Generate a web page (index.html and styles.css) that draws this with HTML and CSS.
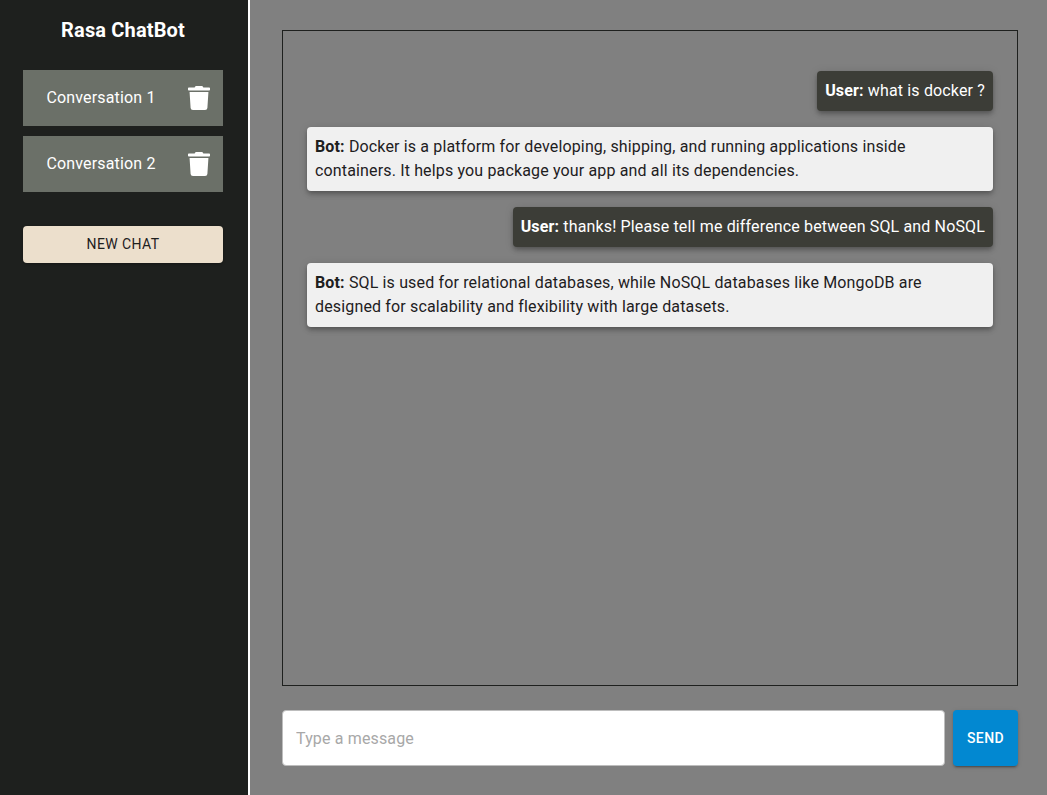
FILE: index.html
```html
<!DOCTYPE html>
<html lang="en">
<head>
<meta charset="utf-8">
<title>Rasa ChatBot</title>
<link rel="stylesheet" href="styles.css">
</head>
<body>
<div class="app">
  <aside class="sidebar">
    <h1 class="title">Rasa ChatBot</h1>
    <ul class="conversations">
      <li class="conversation">
        <span class="conversation-name">Conversation 1</span>
        <svg class="trash" viewBox="0 0 448 512" preserveAspectRatio="none" aria-hidden="true"><path d="M432 32H312l-9.4-18.7A24 24 0 0 0 281.1 0H166.8a23.72 23.72 0 0 0-21.4 13.3L136 32H16A16 16 0 0 0 0 48v32a16 16 0 0 0 16 16h416a16 16 0 0 0 16-16V48a16 16 0 0 0-16-16zM53.2 467a48 48 0 0 0 47.9 45h245.8a48 48 0 0 0 47.9-45L416 128H32z"/></svg>
      </li>
      <li class="conversation">
        <span class="conversation-name">Conversation 2</span>
        <svg class="trash" viewBox="0 0 448 512" preserveAspectRatio="none" aria-hidden="true"><path d="M432 32H312l-9.4-18.7A24 24 0 0 0 281.1 0H166.8a23.72 23.72 0 0 0-21.4 13.3L136 32H16A16 16 0 0 0 0 48v32a16 16 0 0 0 16 16h416a16 16 0 0 0 16-16V48a16 16 0 0 0-16-16zM53.2 467a48 48 0 0 0 47.9 45h245.8a48 48 0 0 0 47.9-45L416 128H32z"/></svg>
      </li>
    </ul>
    <button class="new-chat" type="button">New Chat</button>
  </aside>
  <main class="main">
    <section class="chat">
      <div class="message user"><strong>User:</strong> what is docker ?</div>
      <div class="message bot"><strong>Bot:</strong> Docker is a platform for developing, shipping, and running applications inside containers. It helps you package your app and all its dependencies.</div>
      <div class="message user"><strong>User:</strong> thanks! Please tell me difference between SQL and NoSQL</div>
      <div class="message bot"><strong>Bot:</strong> SQL is used for relational databases, while NoSQL databases like MongoDB are designed for scalability and flexibility with large datasets.</div>
    </section>
    <form class="composer">
      <input class="composer-input" type="text" placeholder="Type a message">
      <button class="send" type="button">Send</button>
    </form>
  </main>
</div>
</body>
</html>
```
FILE: styles.css
```css
* {
  box-sizing: border-box;
}

html,
body {
  height: 100%;
}

body {
  margin: 0;
  font-family: Roboto, "Liberation Sans", sans-serif;
  font-size: 16px;
  line-height: 24px;
  letter-spacing: 0.15px;
  background: #808080;
  overflow: hidden;
}

.app {
  display: flex;
  height: 795px;
}

.sidebar {
  flex: 0 0 250px;
  padding: 16px 25px 0 23px;
  background: #1e201e;
  border-right: 2px solid #ffffff;
}

.title {
  margin: 0 0 26px;
  color: #ffffff;
  font-size: 20px;
  line-height: 28px;
  font-weight: 700;
  letter-spacing: 0.15px;
  text-align: center;
}

.conversations {
  display: flex;
  flex-direction: column;
  gap: 10px;
  margin: 0 0 34px;
  padding: 0;
  list-style: none;
}

.conversation {
  display: flex;
  align-items: center;
  justify-content: space-between;
  width: 200px;
  height: 56px;
  padding: 0 13px 0 23.5px;
  background: #6b7068;
  color: #ffffff;
}

.trash {
  width: 22px;
  height: 24px;
  fill: #ffffff;
}

.new-chat {
  display: block;
  width: 200px;
  height: 37px;
  padding: 0 0 2px;
  border: 0;
  border-radius: 4px;
  background: #ecdfcc;
  color: #1e201e;
  font: 400 14px/24px Roboto, "Liberation Sans", sans-serif;
  letter-spacing: 0.4px;
  text-transform: uppercase;
  box-shadow: 0 1px 3px rgba(0, 0, 0, 0.3);
}

.main {
  flex: 1;
  display: flex;
  flex-direction: column;
  min-width: 0;
  padding: 30px 29px 29px 32px;
}

.chat {
  display: flex;
  flex-direction: column;
  align-items: flex-start;
  gap: 16px;
  height: 656px;
  padding: 40px 24px 24px;
  border: 1px solid #1e201e;
}

.message {
  max-width: 100%;
  padding: 8px;
  border-radius: 4px;
  box-shadow: 0 2px 4px -1px rgba(0, 0, 0, 0.2), 0 4px 5px rgba(0, 0, 0, 0.14), 0 1px 10px rgba(0, 0, 0, 0.12);
}

.message.user {
  align-self: flex-end;
  background: #3c3d37;
  color: #ffffff;
}

.message.bot {
  align-self: stretch;
  background: #f0f0f0;
  color: #1e201e;
}

.composer {
  display: flex;
  gap: 8px;
  margin: 24px 0 0;
}

.composer-input {
  flex: 1;
  min-width: 0;
  height: 56px;
  padding: 0 13px;
  border: 1px solid #bdbdbd;
  border-radius: 4px;
  background: #ffffff;
  font: 400 16px Roboto, "Liberation Sans", sans-serif;
  letter-spacing: 0.15px;
  color: #1e201e;
  outline: none;
}

.composer-input::placeholder {
  color: #a8a8a8;
  opacity: 1;
}

.send {
  flex: 0 0 65px;
  height: 56px;
  padding: 0;
  border: 0;
  border-radius: 4px;
  background: #0288d1;
  color: #ffffff;
  font: 500 14px/24px Roboto, "Liberation Sans", sans-serif;
  letter-spacing: 0.4px;
  text-transform: uppercase;
  box-shadow: 0 3px 1px -2px rgba(0, 0, 0, 0.2), 0 2px 2px rgba(0, 0, 0, 0.14), 0 1px 5px rgba(0, 0, 0, 0.12);
}
```
